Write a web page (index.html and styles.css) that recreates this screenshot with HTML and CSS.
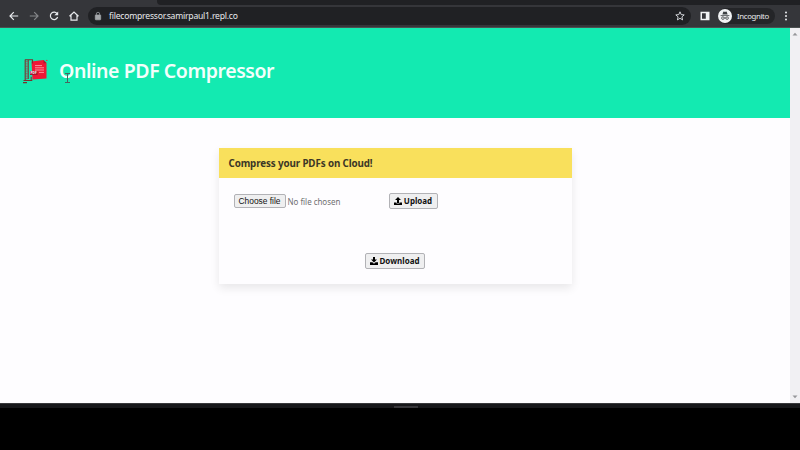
FILE: index.html
```html
<!DOCTYPE html>
<html lang="en">
<head>
<meta charset="utf-8">
<title>Online PDF Compressor</title>
<link rel="stylesheet" href="styles.css">
</head>
<body>
<div class="tabstrip"><div class="tab-active"></div><div class="tab-rest"></div></div>
<div class="toolbar">
  <svg class="nav" viewBox="0 0 12 12"><path d="M10.2 6H2M5.8 2.2L2 6l3.8 3.8"/></svg>
  <svg class="nav dim" viewBox="0 0 12 12"><path d="M1.8 6H10M6.2 2.2L10 6 6.2 9.8"/></svg>
  <svg class="nav" viewBox="0 0 12 12"><path d="M9.3 4A3.7 3.7 0 1 0 9.6 7"/><path class="solid" d="M10.2 1.4v3.9H6.3z"/></svg>
  <svg class="nav" viewBox="0 0 12 12"><path d="M1.5 6.2L6 2l4.5 4.2M3 5.3v4.9h6V5.3"/></svg>
  <div class="address">
    <svg class="lock" viewBox="0 0 8 10"><path d="M2.3 4.5V3a1.7 1.7 0 0 1 3.4 0v1.5"/><rect x="1.3" y="4" width="5.4" height="4.8" rx=".6"/></svg>
    <span class="url">filecompressor.samirpaul1.repl.co</span>
    <svg class="star" viewBox="0 0 12 12"><path d="M6 1.8l1.2 2.8 3 .3-2.3 2 .7 3L6 8.3 3.4 9.9l.7-3-2.3-2 3-.3z"/></svg>
  </div>
  <svg class="panel" viewBox="0 0 10 10"><path d="M.5 .8h9v8.4h-9zM2 2.3v5.4h3.8V2.3z"/></svg>
  <div class="profile">
    <svg class="spy" viewBox="0 0 14 14"><circle class="disc" cx="7" cy="7" r="7"/><path class="hat" d="M4.4 5.6l.8-2.7q.2-.5.8-.3l1 .3 1-.3q.6-.2.8.3l.8 2.7z"/><path class="line" d="M2.6 6.6h8.8M6.2 9q.8-.5 1.6 0"/><circle class="line" cx="4.9" cy="9.1" r="1.3"/><circle class="line" cx="9.1" cy="9.1" r="1.3"/></svg>
    <span>Incognito</span>
  </div>
  <svg class="dots" viewBox="0 0 4 12"><circle cx="2" cy="2.4" r="1"/><circle cx="2" cy="6" r="1"/><circle cx="2" cy="9.6" r="1"/></svg>
</div>
<div class="viewport">
  <main class="page">
    <header class="banner">
      <svg class="logo" viewBox="0 0 26 26">
        <path class="file" d="M9.5 3.6L21.5 2l3 3V20.5l-14 1z"/>
        <path class="fold" d="M21.5 2v3.4l3-.4z"/>
        <path class="rule" d="M13 7.6h7M13 9.8h9M13 12h9M17 14.4h5"/>
        <path class="screw" d="M4.7 3v20"/>
        <path class="frame" d="M11 1.7H2.8M3.2 2v20.5M6.2 2v19M10.5 1.5v4M1.5 22.5h8.8M1 24.6h4M9.2 18.7v4"/>
        <rect class="label" x="8" y="13" width="7.5" height="4"/>
        <text x="8.6" y="16.4">PDF</text>
        <circle class="file" cx="24.8" cy="2.4" r=".6"/>
      </svg>
      <h1>Online PDF Compressor</h1>
      <svg class="cursor" viewBox="0 0 7 12"><path d="M1 1.5h5M3.5 1.5v9M1 10.5h5"/></svg>
    </header>
    <section class="card">
      <h2>Compress your PDFs on Cloud!</h2>
      <div class="row">
        <div class="picker"><button class="choose">Choose file</button><span class="empty">No file chosen</span></div>
        <button class="action upload"><svg viewBox="0 0 8 8"><path d="M4 0l3 3H5v3H3V3H1zM0 5.6h2.5v1h3v-1H8V8H0z"/></svg><span>Upload</span></button>
      </div>
      <button class="action download"><svg viewBox="0 0 8 8"><path d="M3 0h2v2.5h2l-3 3-3-3h2zM0 5.3h2.4L4 6.7l1.6-1.4H8V8H0z"/></svg><span>Download</span></button>
    </section>
  </main>
  <div class="scrollbar"><svg viewBox="0 0 6 4"><path d="M.5 3.5L3 .7l2.5 2.8z"/></svg><svg viewBox="0 0 6 4"><path d="M.5.5L3 3.3 5.5.5z"/></svg></div>
</div>
<footer class="bottom"><div class="handle"></div></footer>
</body>
</html>
```
FILE: styles.css
```css
* { box-sizing: border-box; }
body { margin: 0; width: 800px; height: 450px; overflow: hidden; background: #000; font-family: "Noto Sans", "Open Sans", sans-serif; }
svg { display: block; flex: none; }
.tabstrip { display: flex; height: 5px; background: #35363a; }
.tab-active { width: 157px; background: #35363a; }
.tab-rest { flex: 1; background: #202124; border-bottom-left-radius: 4px; }
.toolbar { display: flex; align-items: center; height: 22.5px; padding: 0 8px; background: #35363a; border-bottom: 1px solid #4c5151; }
.nav { width: 12px; height: 12px; margin-right: 8px; fill: none; stroke: #e8eaed; stroke-width: 1.2; }
.dim { stroke: #85878a; }
.solid { fill: #e8eaed; stroke: none; }
.address { display: flex; align-items: center; width: 603px; height: 18px; padding: 0 5px 0 6px; border-radius: 9px; background: #202124; }
.lock { width: 8px; height: 10px; margin-right: 7px; fill: #a4a7aa; stroke: #a4a7aa; stroke-width: .7; }
.lock path { fill: none; }
.url { flex: 1; color: #e8eaed; font-size: 8.6px; line-height: 16px; letter-spacing: -.22px; white-space: nowrap; }
.star { width: 12px; height: 12px; fill: none; stroke: #dfe1e5; stroke-width: .9; }
.panel { width: 10px; height: 10px; margin-left: 9px; fill: #f1f3f4; fill-rule: evenodd; }
.profile { display: flex; align-items: center; gap: 5px; width: 57px; height: 16px; margin-left: 8px; border-radius: 8px; background: #242528; color: #e8eaed; font-size: 7.8px; letter-spacing: -.35px; }
.spy { width: 14px; height: 14px; }
.disc { fill: #f1f3f4; }
.hat { fill: #3c4043; }
.line { fill: none; stroke: #3c4043; stroke-width: .8; }
.dots { width: 4px; height: 12px; margin-left: 9px; fill: #e8eaed; }
.viewport { display: flex; height: 375.5px; }
.page { width: 789.5px; background: #fefdff; }
.banner { position: relative; display: flex; align-items: center; height: 90px; padding: 0 0 4px 22px; background: #13eab1; }
.logo { width: 26px; height: 26px; margin-right: 11px; }
.file { fill: #ee1736; }
.fold { fill: #a51c31; }
.rule { fill: none; stroke: #ffb0b7; stroke-width: .8; }
.screw { fill: none; stroke: #8b6d67; stroke-width: 1.6; stroke-dasharray: 1 .7; }
.frame { fill: none; stroke: #7b302f; stroke-width: 1.1; }
.label { fill: #a8132d; }
.logo text { fill: #fff; font-size: 3.2px; font-weight: 700; }
.banner h1 { margin: 0; color: #f3fffc; font-size: 19.5px; line-height: 28px; font-weight: 600; letter-spacing: -.43px; white-space: nowrap; }
.cursor { position: absolute; left: 64px; top: 44px; width: 7px; height: 12px; fill: none; stroke: #49655f; stroke-width: 1; }
.card { width: 353px; height: 136px; margin: 30px 0 0 218.5px; background: #fefdff; box-shadow: 0 4px 9px rgba(0, 0, 0, .09); }
.card h2 { height: 30px; margin: 0; padding-left: 10px; background: #f9e05c; color: #3c3726; font-size: 9.8px; line-height: 31px; font-weight: 700; letter-spacing: -.12px; }
.row { display: flex; height: 31px; padding: 15px 0 0 15px; }
.picker { display: flex; align-items: center; width: 155px; height: 17px; }
.choose, .action { padding: 0; border: 1px solid #b2b2b6; border-radius: 2px; background: #efeff0; color: #111; }
.choose { width: 52px; height: 14px; font: 8.4px/12px "Liberation Sans", sans-serif; }
.empty { margin-left: 2px; color: #707072; font-size: 8px; letter-spacing: -.04px; }
.action { display: flex; align-items: center; justify-content: center; gap: 2px; height: 16px; font: 700 8px/14px "Noto Sans", sans-serif; }
.action svg { width: 8px; height: 8px; }
.action span { padding-top: 1px; }
.upload { width: 49px; }
.download { width: 60px; margin: 44px 0 0 146px; }
.scrollbar { display: flex; flex-direction: column; align-items: center; justify-content: space-between; width: 10.5px; padding: 4px 0; background: #f1f0f3; }
.scrollbar svg { width: 6px; height: 4px; fill: #96969a; }
.bottom { display: flex; justify-content: center; align-items: flex-end; height: 5px; padding-left: 11px; background: #17171a; border-top: 1px solid #39393c; }
.handle { width: 24px; height: 2px; background: #38373b; }
```
